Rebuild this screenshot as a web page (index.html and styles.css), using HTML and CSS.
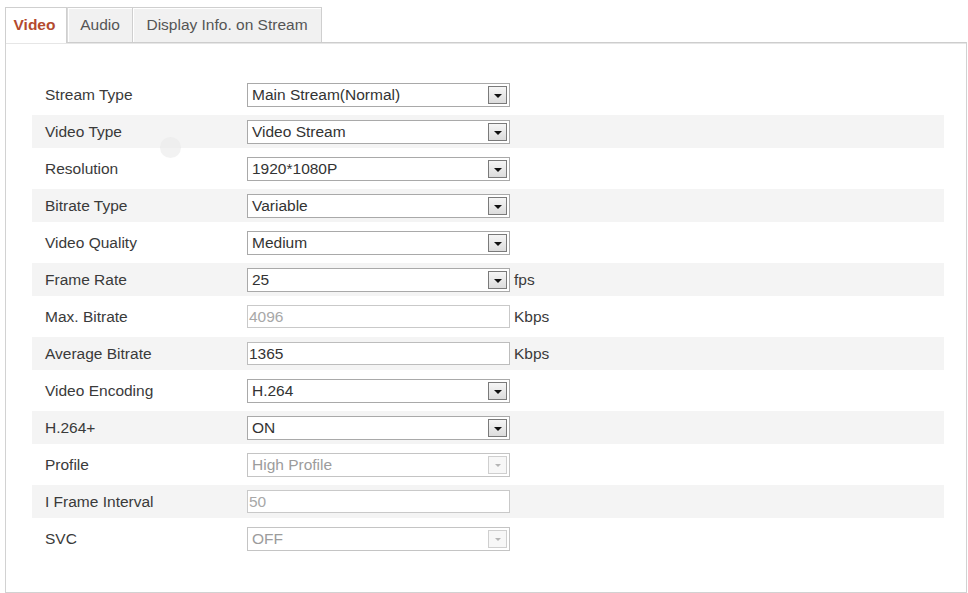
FILE: index.html
```html
<!DOCTYPE html>
<html>
<head>
<meta charset="utf-8">
<link rel="stylesheet" href="styles.css">
</head>
<body>
<div class="wrap">
  <div class="tabs">
    <div class="tab tab-video active">Video</div>
    <div class="tab tab-audio">Audio</div>
    <div class="tab tab-osd">Display Info. on Stream</div>
  </div>
  <div class="panel">
    <div class="row"><span class="label">Stream Type</span><div class="sel"><span class="val">Main Stream(Normal)</span><span class="btn"><i class="arrow"></i></span></div></div>
    <div class="row alt"><span class="label">Video Type</span><div class="sel"><span class="val">Video Stream</span><span class="btn"><i class="arrow"></i></span></div></div>
    <div class="row"><span class="label">Resolution</span><div class="sel"><span class="val">1920*1080P</span><span class="btn"><i class="arrow"></i></span></div></div>
    <div class="row alt"><span class="label">Bitrate Type</span><div class="sel"><span class="val">Variable</span><span class="btn"><i class="arrow"></i></span></div></div>
    <div class="row"><span class="label">Video Quality</span><div class="sel"><span class="val">Medium</span><span class="btn"><i class="arrow"></i></span></div></div>
    <div class="row alt"><span class="label">Frame Rate</span><div class="sel"><span class="val">25</span><span class="btn"><i class="arrow"></i></span></div><span class="unit">fps</span></div>
    <div class="row"><span class="label">Max. Bitrate</span><div class="inp disabled">4096</div><span class="unit">Kbps</span></div>
    <div class="row alt"><span class="label">Average Bitrate</span><div class="inp">1365</div><span class="unit">Kbps</span></div>
    <div class="row"><span class="label">Video Encoding</span><div class="sel"><span class="val">H.264</span><span class="btn"><i class="arrow"></i></span></div></div>
    <div class="row alt"><span class="label">H.264+</span><div class="sel"><span class="val">ON</span><span class="btn"><i class="arrow"></i></span></div></div>
    <div class="row"><span class="label">Profile</span><div class="sel disabled"><span class="val">High Profile</span><span class="btn"><i class="arrow"></i></span></div></div>
    <div class="row alt"><span class="label">I Frame Interval</span><div class="inp disabled">50</div></div>
    <div class="row"><span class="label">SVC</span><div class="sel disabled"><span class="val">OFF</span><span class="btn"><i class="arrow"></i></span></div></div>
    <div class="watermark"></div>
  </div>
</div>
</body>
</html>
```
FILE: styles.css
```css
* { box-sizing: border-box; }
html, body { margin: 0; padding: 0; background: #fff; }
body {
  font-family: "Liberation Sans", Arial, sans-serif;
  font-size: 15.5px;
  color: #3a3a3a;
}
.wrap {
  padding: 7px 0 0 5px;
  width: 967px;
}
.tabs {
  display: flex;
  height: 35px;
  position: relative;
  z-index: 1;
}
.tab {
  height: 35px;
  line-height: 33px;
  text-align: center;
  border: 1px solid #cfcfcf;
  border-bottom: none;
  background: #f1f1f1;
  color: #555;
  box-shadow: inset 1px 1px 0 #fff;
}
.tab-video { width: 62px; }
.tab-audio { width: 66px; border-left: 1px solid #d9d9d9; }
.tab-osd { width: 190px; margin-left: -1px; }
.tab.active {
  background: #fff;
  color: #b44a2e;
  font-weight: bold;
  height: 36px;
  padding-right: 3px;
}
.panel {
  position: relative;
  border: 1px solid #d2d2d2;
  border-top-color: #cdcdcd;
  height: 551px;
  padding: 35px 22px 0 26px;
  box-shadow: inset 0 1px 0 #e6e6e6;
}
.watermark {
  position: absolute;
  left: 154px;
  top: 94px;
  width: 21px;
  height: 21px;
  border-radius: 50%;
  background: #e9e9e9;
  opacity: 0.6;
  z-index: 2;
}
.row {
  display: flex;
  align-items: center;
  height: 33px;
  margin-bottom: 4px;
  padding-left: 13px;
}
.row.alt { background: #f4f4f4; }
.label {
  width: 202px;
  flex: none;
}
.sel {
  width: 263px;
  height: 24px;
  border: 1px solid #a9a9a9;
  background: #fff;
  display: flex;
  align-items: center;
  justify-content: space-between;
  padding: 0 2px 0 4px;
  color: #333;
}
.sel .btn {
  width: 19px;
  height: 18px;
  border: 1px solid #7a7a7a;
  background: linear-gradient(#f6f6f6, #dcdcdc);
  display: flex;
  align-items: center;
  justify-content: center;
}
.arrow {
  width: 0;
  height: 0;
  border-left: 4px solid transparent;
  border-right: 4px solid transparent;
  border-top: 4px solid #111;
  margin-top: 2px;
}
.sel.disabled { border-color: #c4c4c4; color: #9c9c9c; }
.sel.disabled .btn {
  border-color: #cfcfcf;
  background: #f7f7f7;
}
.sel.disabled .arrow { border-top-color: #b5b5b5; border-left-width: 3px; border-right-width: 3px; border-top-width: 3px; }
.inp {
  width: 263px;
  height: 23px;
  border: 1px solid #bdbdbd;
  background: #fff;
  line-height: 21px;
  padding-left: 1px;
  color: #333;
}
.inp.disabled { color: #a8a8a8; border-color: #c9c9c9; }
.unit {
  margin-left: 4px;
  color: #3a3a3a;
}
```
